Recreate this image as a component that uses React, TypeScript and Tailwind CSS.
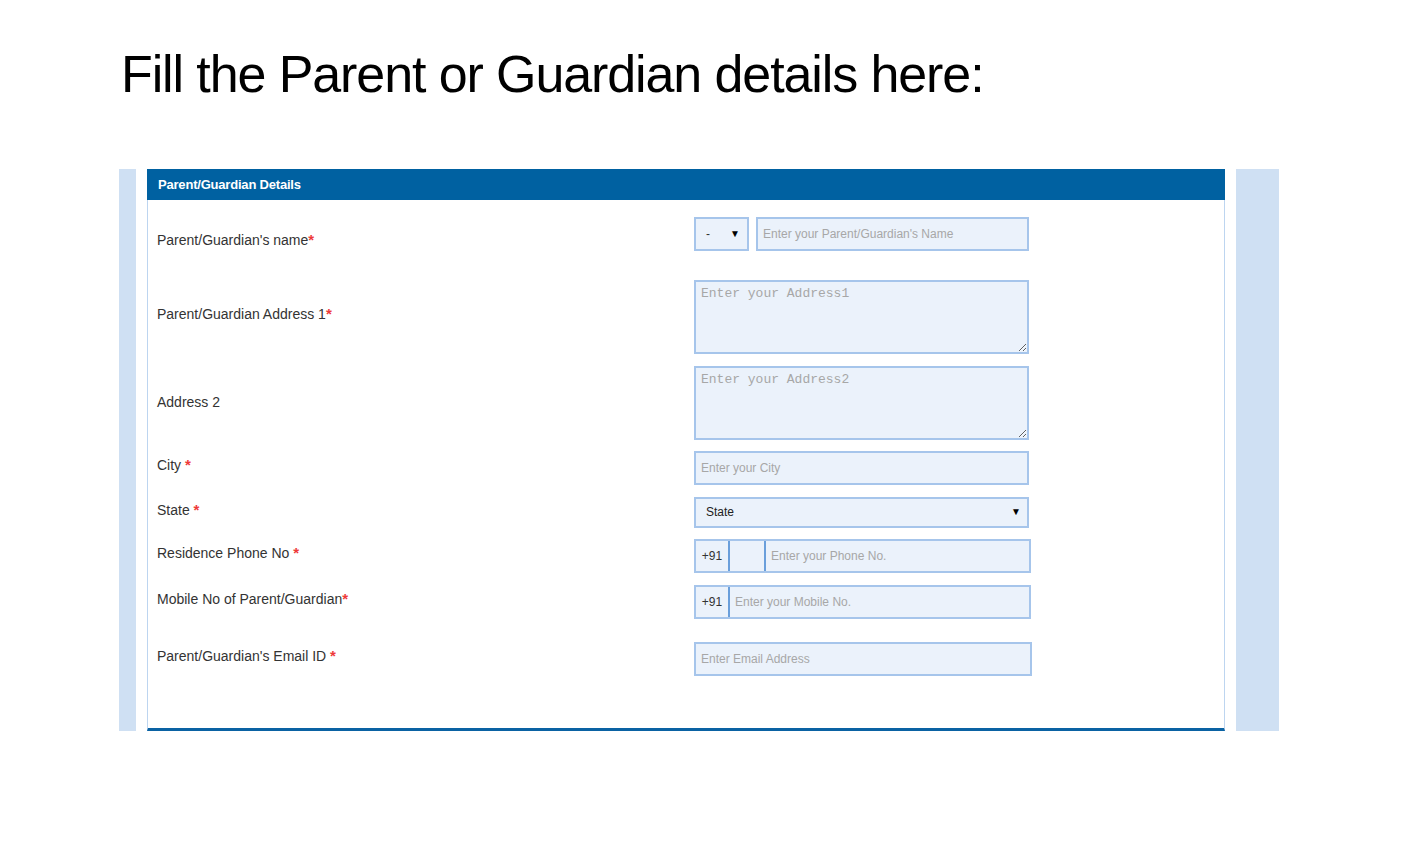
import { ReactNode } from 'react';

// ── Small pieces ─────────────────────────────────────────────────────────────
const box = 'border-2 border-[#a6c5eb] bg-[#ebf2fb]';
const ph = 'placeholder:text-[#a7a7a7] outline-none';

function Label({ text, gap, className = '' }: { text: string; gap?: boolean; className?: string }) {
  return (
    <div className={`w-[537px] shrink-0 text-[14px] text-[#333] ${className}`}>
      {text}
      {gap ? ' ' : ''}
      <span className="text-[15px] font-bold text-[#ee3a3a]">*</span>
    </div>
  );
}

function Row({ children, className = '' }: { children: ReactNode; className?: string }) {
  return <div className={`flex items-center ${className}`}>{children}</div>;
}

function Arrow() {
  return <span className="text-[10px] leading-none text-black">▼</span>;
}

// ── Page ─────────────────────────────────────────────────────────────────────
export default function App() {
  return (
    <div className="min-h-[841px] w-[1406px] bg-white" style={{ fontFamily: '"Liberation Sans", Arial, sans-serif' }}>
      <h1 className="pl-[121px] pt-[48px] text-[52px] leading-[52px] tracking-[-1.1px] text-black">
        Fill the Parent or Guardian details here:
      </h1>

      <div className="mt-[69px] flex pl-[119px]">
        <div className="h-[562px] w-[17px] bg-[#cfe0f3]" />

        <div className="ml-[11px] flex h-[562px] w-[1078px] flex-col border-x border-b-[3px] border-x-[#bdd5f0] border-b-[#0a62a3]">
          <div className="-mx-px flex h-[31px] items-center bg-[#0061a1] px-[11px] text-[13px] font-bold tracking-[-0.2px] text-white">
            Parent/Guardian Details
          </div>

          <div className="flex flex-col pl-[9px]">
            <Row className="mt-[17px]">
              <Label text="Parent/Guardian's name" className="mt-3" />
              <div className={`flex h-[34px] w-[55px] items-center justify-between pl-[10px] pr-[7px] text-[12px] text-[#333] ${box}`}>
                <span>-</span>
                <Arrow />
              </div>
              <input
                className={`ml-[7px] h-[34px] w-[273px] px-[5px] text-[12px] ${box} ${ph}`}
                placeholder="Enter your Parent/Guardian's Name"
              />
            </Row>

            <Row className="mt-[28px]">
              <Label text="Parent/Guardian Address 1" className="-mt-1" />
              <textarea
                className={`h-[74px] w-[335px] px-[5px] pt-[2px] text-[13px] ${box} ${ph}`}
                style={{ fontFamily: '"Liberation Mono", "Courier New", monospace' }}
                placeholder="Enter your Address1"
              />
            </Row>

            <Row className="mt-[12px]">
              <div className="w-[537px] shrink-0 text-[14px] text-[#333]">Address 2</div>
              <textarea
                className={`h-[74px] w-[335px] px-[5px] pt-[2px] text-[13px] ${box} ${ph}`}
                style={{ fontFamily: '"Liberation Mono", "Courier New", monospace' }}
                placeholder="Enter your Address2"
              />
            </Row>

            <Row className="mt-[11px]">
              <Label text="City" gap className="-mt-1" />
              <input className={`h-[34px] w-[335px] px-[5px] text-[12px] ${box} ${ph}`} placeholder="Enter your City" />
            </Row>

            <Row className="mt-[12px]">
              <Label text="State" gap className="-mt-1" />
              <div className={`flex h-[31px] w-[335px] items-center justify-between pl-[10px] pr-[6px] text-[12px] text-[#222] ${box}`}>
                <span>State</span>
                <Arrow />
              </div>
            </Row>

            <Row className="mt-[11px]">
              <Label text="Residence Phone No" gap className="-mt-1" />
              <div className={`flex h-[34px] w-[337px] ${box}`}>
                <div className="flex w-[34px] items-center justify-center border-r-2 border-[#6a9fdb] text-[12px] text-[#333]">+91</div>
                <div className="w-[36px] border-r-2 border-[#6a9fdb]" />
                <input className={`min-w-0 flex-1 bg-transparent px-[5px] text-[12px] ${ph}`} placeholder="Enter your Phone No." />
              </div>
            </Row>

            <Row className="mt-[12px]">
              <Label text="Mobile No of Parent/Guardian" className="-mt-1" />
              <div className={`flex h-[34px] w-[337px] ${box}`}>
                <div className="flex w-[34px] items-center justify-center border-r-2 border-[#6a9fdb] text-[12px] text-[#333]">+91</div>
                <input className={`min-w-0 flex-1 bg-transparent px-[5px] text-[12px] ${ph}`} placeholder="Enter your Mobile No." />
              </div>
            </Row>

            <Row className="mt-[23px]">
              <Label text="Parent/Guardian's Email ID" gap className="-mt-1" />
              <input className={`h-[34px] w-[338px] px-[5px] text-[12px] ${box} ${ph}`} placeholder="Enter Email Address" />
            </Row>
          </div>
        </div>

        <div className="ml-[11px] h-[562px] w-[43px] bg-[#cfe0f3]" />
      </div>
    </div>
  );
}
